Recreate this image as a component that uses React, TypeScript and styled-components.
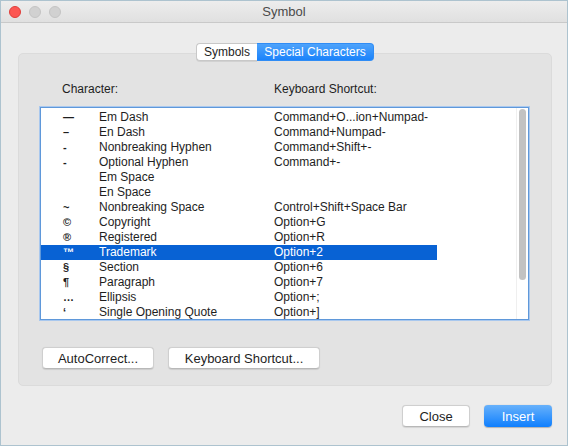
import React from 'react';
import styled, { createGlobalStyle, css } from 'styled-components';

interface SpecialChar {
  glyph: string;
  name: string;
  shortcut: string;
}

const chars: SpecialChar[] = [
  { glyph: '—', name: 'Em Dash', shortcut: 'Command+O...ion+Numpad-' },
  { glyph: '–', name: 'En Dash', shortcut: 'Command+Numpad-' },
  { glyph: '-', name: 'Nonbreaking Hyphen', shortcut: 'Command+Shift+-' },
  { glyph: '-', name: 'Optional Hyphen', shortcut: 'Command+-' },
  { glyph: '', name: 'Em Space', shortcut: '' },
  { glyph: '', name: 'En Space', shortcut: '' },
  { glyph: '~', name: 'Nonbreaking Space', shortcut: 'Control+Shift+Space Bar' },
  { glyph: '©', name: 'Copyright', shortcut: 'Option+G' },
  { glyph: '®', name: 'Registered', shortcut: 'Option+R' },
  { glyph: '™', name: 'Trademark', shortcut: 'Option+2' },
  { glyph: '§', name: 'Section', shortcut: 'Option+6' },
  { glyph: '¶', name: 'Paragraph', shortcut: 'Option+7' },
  { glyph: '…', name: 'Ellipsis', shortcut: 'Option+;' },
  { glyph: '‘', name: 'Single Opening Quote', shortcut: 'Option+]' }
];

const SELECTED = 9;

const GlobalStyle = createGlobalStyle`
  html, body {
    margin: 0;
    padding: 0;
    background: #ececec;
  }
  * {
    box-sizing: border-box;
  }
`;

const Window = styled.div`
  width: 568px;
  height: 446px;
  display: flex;
  flex-direction: column;
  background: #ececec;
  border: 1px solid #adc3cf;
  font-family: 'Liberation Sans', Arial, sans-serif;
  color: #1e1e1e;
  overflow: hidden;
`;

const TitleBar = styled.div`
  height: 22px;
  flex: none;
  display: grid;
  grid-template-columns: 1fr auto 1fr;
  align-items: center;
  padding: 0 8px;
  background: linear-gradient(#ededed, #e0e0e0);
  border-bottom: 1px solid #c9c9c9;
`;

const Lights = styled.div`
  display: flex;
  gap: 8px;
`;

const Light = styled.span<{ $color: 'red' | 'gray' }>`
  width: 12px;
  height: 12px;
  border-radius: 50%;
  ${(p) =>
    p.$color === 'red'
      ? css`
          background: #fc5753;
          border: 1px solid #df3e3a;
        `
      : css`
          background: #d1d1d1;
          border: 1px solid #c4c4c4;
        `}
`;

const Title = styled.div`
  font-size: 13px;
  color: #4a4a4a;
`;

const Content = styled.div`
  flex: 1;
  display: flex;
  flex-direction: column;
  padding: 20px 15px 18px 17px;
`;

const Tabs = styled.div`
  display: flex;
  justify-content: center;
  margin-bottom: -8px;
  position: relative;
  z-index: 1;
`;

const Tab = styled.div<{ $active?: boolean; $width: number }>`
  width: ${(p) => p.$width}px;
  height: 18px;
  display: flex;
  align-items: center;
  justify-content: center;
  font-size: 12px;
  white-space: nowrap;
  ${(p) =>
    p.$active
      ? css`
          background: linear-gradient(#4ea3fb, #1b83fb);
          color: #fff;
          border-radius: 0 4px 4px 0;
          border: 1px solid #2f8cf5;
          border-left: none;
        `
      : css`
          background: #fff;
          color: #1e1e1e;
          border-radius: 4px 0 0 4px;
          border: 1px solid #c8c8c8;
          border-right: none;
          box-shadow: 0 1px 0 rgba(0, 0, 0, 0.08);
        `}
`;

const GroupBox = styled.div`
  height: 333px;
  flex: none;
  display: flex;
  flex-direction: column;
  background: #e3e3e3;
  border: 1px solid #dbdbdb;
  border-radius: 5px;
  padding: 28px 22px 16px 21px;
`;

const HeaderRow = styled.div`
  display: grid;
  grid-template-columns: 212px 1fr;
  padding-left: 22px;
  font-size: 12px;
  line-height: 15px;
  height: 15px;
`;

const ListBox = styled.div`
  margin-top: 10px;
  height: 213px;
  display: flex;
  background: #fff;
  border: 1px solid #5f98da;
  box-shadow: 0 0 0 1px #a9c8ee;
  overflow: hidden;
`;

const Table = styled.div`
  flex: 1;
  padding-top: 2px;
`;

const Row = styled.div<{ $selected?: boolean }>`
  width: 396px;
  height: 15px;
  display: grid;
  grid-template-columns: 36px 175px 1fr;
  align-items: center;
  padding-left: 22px;
  font-size: 12px;
  line-height: 15px;
  white-space: nowrap;
  background: ${(p) => (p.$selected ? '#0862d4' : 'transparent')};
  color: ${(p) => (p.$selected ? '#fff' : '#1e1e1e')};
`;

const Glyph = styled.span`
  font-size: 11px;
  font-weight: bold;
`;

const ScrollTrack = styled.div`
  width: 12px;
  flex: none;
  border-left: 1px solid #efefef;
  padding: 1px 2px 0 2px;
`;

const ScrollThumb = styled.div`
  width: 7px;
  height: 171px;
  border-radius: 4px;
  background: #c2c2c2;
`;

const ButtonRow = styled.div<{ $end?: boolean }>`
  display: flex;
  gap: 14px;
  justify-content: ${(p) => (p.$end ? 'flex-end' : 'flex-start')};
`;

const Button = styled.div<{ $primary?: boolean; $width: number }>`
  width: ${(p) => p.$width}px;
  height: 22px;
  display: flex;
  align-items: center;
  justify-content: center;
  border-radius: 4px;
  font-size: 13px;
  ${(p) =>
    p.$primary
      ? css`
          background: linear-gradient(#67b1fb, #0f7ffe);
          color: #fff;
          box-shadow: 0 0.5px 1px rgba(0, 0, 0, 0.25);
        `
      : css`
          background: #fff;
          color: #1e1e1e;
          border: 1px solid #cfcfcf;
          border-bottom-color: #b8b8b8;
          box-shadow: 0 0.5px 1px rgba(0, 0, 0, 0.1);
        `}
`;

const ListButtons = styled(ButtonRow)`
  margin-top: auto;
  padding-left: 2px;
`;

const DialogButtons = styled(ButtonRow)`
  margin-top: auto;
`;

export default function App(): JSX.Element {
  return (
    <>
      <GlobalStyle />
      <Window>
        <TitleBar>
          <Lights>
            <Light $color="red" />
            <Light $color="gray" />
            <Light $color="gray" />
          </Lights>
          <Title>Symbol</Title>
          <div />
        </TitleBar>
        <Content>
          <Tabs>
            <Tab $width={61}>Symbols</Tab>
            <Tab $width={117} $active>
              Special Characters
            </Tab>
          </Tabs>
          <GroupBox>
            <HeaderRow>
              <span>Character:</span>
              <span>Keyboard Shortcut:</span>
            </HeaderRow>
            <ListBox>
              <Table>
                {chars.map((c, i) => (
                  <Row key={c.name} $selected={i === SELECTED}>
                    <Glyph>{c.glyph}</Glyph>
                    <span>{c.name}</span>
                    <span>{c.shortcut}</span>
                  </Row>
                ))}
              </Table>
              <ScrollTrack>
                <ScrollThumb />
              </ScrollTrack>
            </ListBox>
            <ListButtons>
              <Button $width={112}>AutoCorrect...</Button>
              <Button $width={152}>Keyboard Shortcut...</Button>
            </ListButtons>
          </GroupBox>
          <DialogButtons $end>
            <Button $width={68}>Close</Button>
            <Button $width={68} $primary>
              Insert
            </Button>
          </DialogButtons>
        </Content>
      </Window>
    </>
  );
}
